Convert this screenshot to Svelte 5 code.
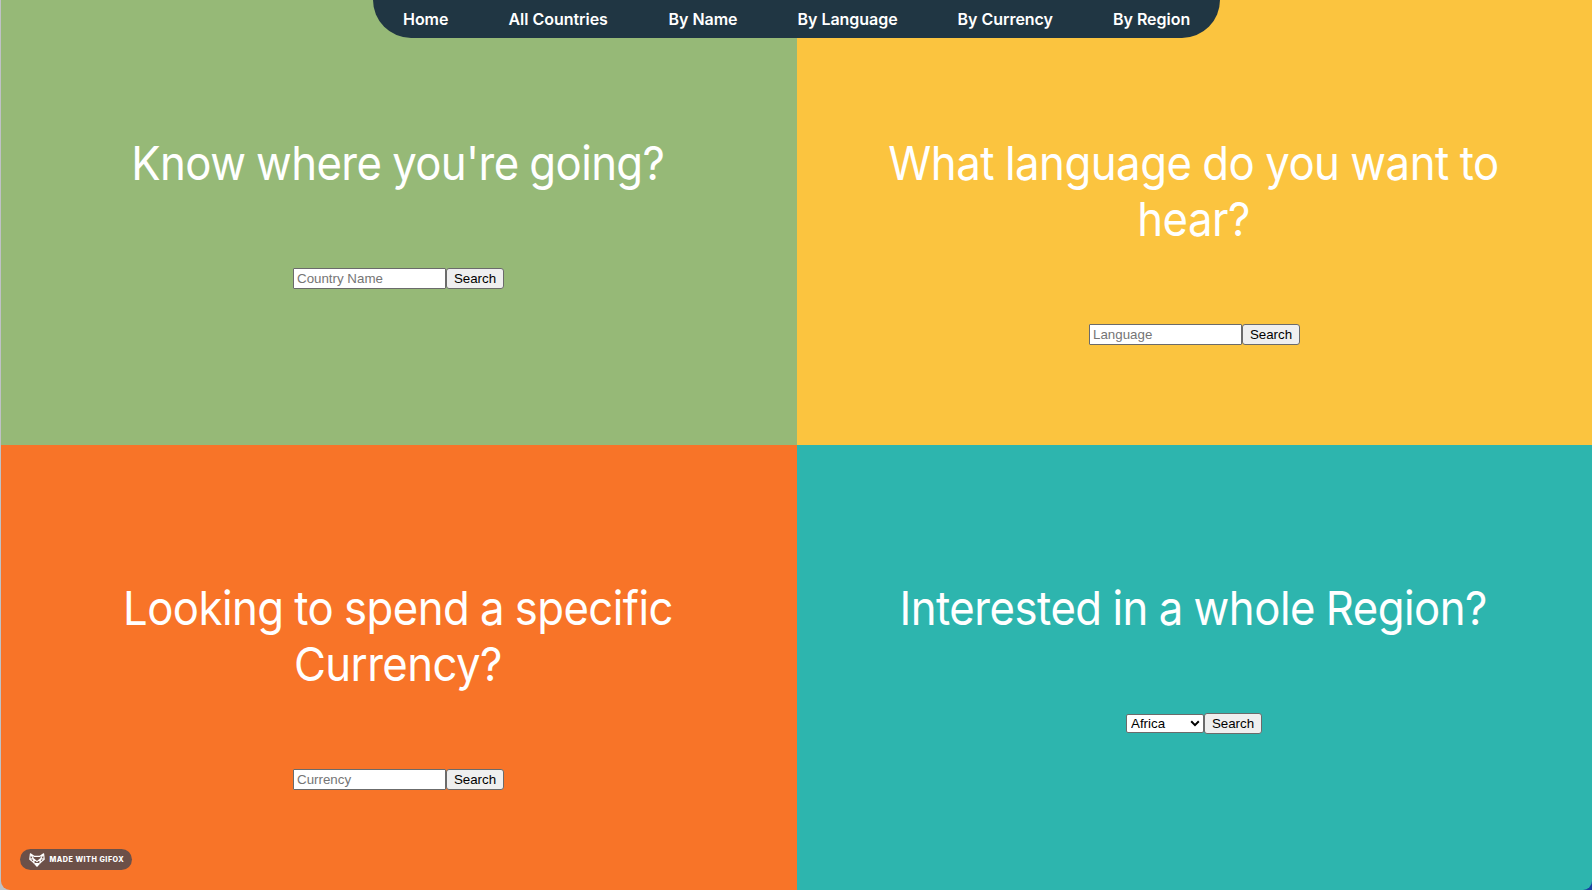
<script>
  const links = [
    { text: 'Home', width: 45.5 },
    { text: 'All Countries', width: 100 },
    { text: 'By Name', width: 69 },
    { text: 'By Language', width: 100 },
    { text: 'By Currency', width: 95.5 },
    { text: 'By Region', width: 77 }
  ];
  const panels = [
    { id: 'name', lines: ["Know where you're going?"], tracking: -0.65, hint: 'Country Name' },
    { id: 'language', lines: ['What language do you want to', 'hear?'], tracking: -0.53, hint: 'Language' },
    { id: 'currency', lines: ['Looking to spend a specific', 'Currency?'], tracking: -0.6, hint: 'Currency' },
    { id: 'region', lines: ['Interested in a whole Region?'], tracking: -0.55, regions: ['Africa', 'Americas', 'Asia', 'Europe', 'Oceania'] }
  ];
</script>

<div class="screen">
  <main>
    {#each panels as panel}
      <section class={panel.id}>
        <h1 style:letter-spacing="{panel.tracking}px">{#each panel.lines as line}<span>{line}</span>{/each}</h1>
        <form onsubmit={(e) => e.preventDefault()}>
          {#if panel.regions}
            <div class="pick">
              <select>{#each panel.regions as region}<option>{region}</option>{/each}</select>
              <svg viewBox="0 0 10 7"><path d="M1.2 1.3 5 5.1 8.8 1.3" /></svg>
            </div>
          {:else}
            <input placeholder={panel.hint} />
          {/if}
          <button>Search</button>
        </form>
      </section>
    {/each}
  </main>
  <nav>
    {#each links as link}<a href="#top" style:width="{link.width}px">{link.text}</a>{/each}
  </nav>
  <div class="badge">
    <svg viewBox="0 0 16 14" fill="none" stroke="#fff" stroke-width="1.15" stroke-linejoin="round">
      <path d="M1.4.8 5.4 3.4H10.6L14.6.8 15.2 6.2 12.4 8.6 8 13.2 3.6 8.6.8 6.2ZM1.4.8 4.4 5.6 8 8.6 11.6 5.6 14.6.8M.8 6.2 4.4 5.6 5.2 10.2M15.2 6.2 11.6 5.6 10.8 10.2" />
      <path d="M6.4 10.6H9.6L8 13Z" fill="#fff" />
    </svg>
    <span>MADE WITH GIFOX</span>
  </div>
</div>

<style>
  :global(body) { margin: 0; overflow: hidden; }
  .screen {
    position: relative;
    box-sizing: border-box;
    width: 1592px;
    height: 890px;
    padding-left: 1px;
    background: linear-gradient(90deg, #bfc1c5 0 50%, #1742a0 50%);
    font-family: Inter, sans-serif;
  }
  main {
    display: grid;
    grid-template-columns: 796px 795px;
    grid-template-rows: 445px 445px;
    border-radius: 0 0 9px 9px;
    overflow: hidden;
  }
  section {
    display: flex;
    flex-direction: column;
    align-items: center;
    gap: 77px;
    padding-top: 135px;
    box-sizing: border-box;
  }
  .name { background: #96b977; padding-right: 1px; }
  .language { background: #fbc43f; }
  .currency { background: #f87428; padding-right: 1px; }
  .region { background: #2db5ae; padding-right: 1px; }
  h1 {
    display: flex;
    flex-direction: column;
    align-items: center;
    margin: 0;
    color: #fff;
    font-size: 47px;
    font-weight: 400;
    line-height: 56px;
    word-spacing: -1px;
    white-space: nowrap;
    transform: translate(-0.7px, 0.3px) scaleX(0.93);
  }
  form { display: flex; align-items: center; height: 21px; }
  input, select, button {
    box-sizing: border-box;
    margin: 0;
    font: 13.333px "Liberation Sans", Arial, sans-serif;
    border: 1px solid #6b6b6b;
    color: #000;
  }
  input { width: 153px; height: 21px; padding: 1px 3px; background: #fff; border-radius: 1px; }
  input::placeholder { color: #757575; }
  button { width: 58px; height: 21px; padding: 0; background: #efefef; border-radius: 3px; }
  .pick { position: relative; display: flex; }
  select { appearance: none; width: 78px; height: 19px; padding: 0 4px; background: #fff; border-radius: 2px; }
  .pick svg { position: absolute; right: 4px; top: 6px; width: 10px; height: 7px; fill: none; stroke: #000; stroke-width: 2; }
  nav {
    position: absolute;
    top: 0;
    left: 373px;
    display: flex;
    justify-content: space-between;
    box-sizing: border-box;
    width: 847px;
    height: 38px;
    padding: 0 30px;
    background: #203643;
    border-radius: 0 0 38px 38px;
  }
  nav a {
    color: #fff;
    font-size: 16px;
    font-weight: 600;
    line-height: 38px;
    text-decoration: none;
    white-space: nowrap;
    letter-spacing: -0.03px;
  }
  .badge {
    position: absolute;
    left: 20px;
    top: 849px;
    display: flex;
    align-items: center;
    gap: 5px;
    box-sizing: border-box;
    width: 112px;
    height: 21px;
    padding-left: 8.5px;
    border-radius: 11px;
    background: #6c5048;
    color: #fff;
    font-size: 7.2px;
    font-weight: 800;
    letter-spacing: 0.5px;
    white-space: nowrap;
  }
  .badge svg { width: 16px; height: 14px; flex: none; }
</style>
